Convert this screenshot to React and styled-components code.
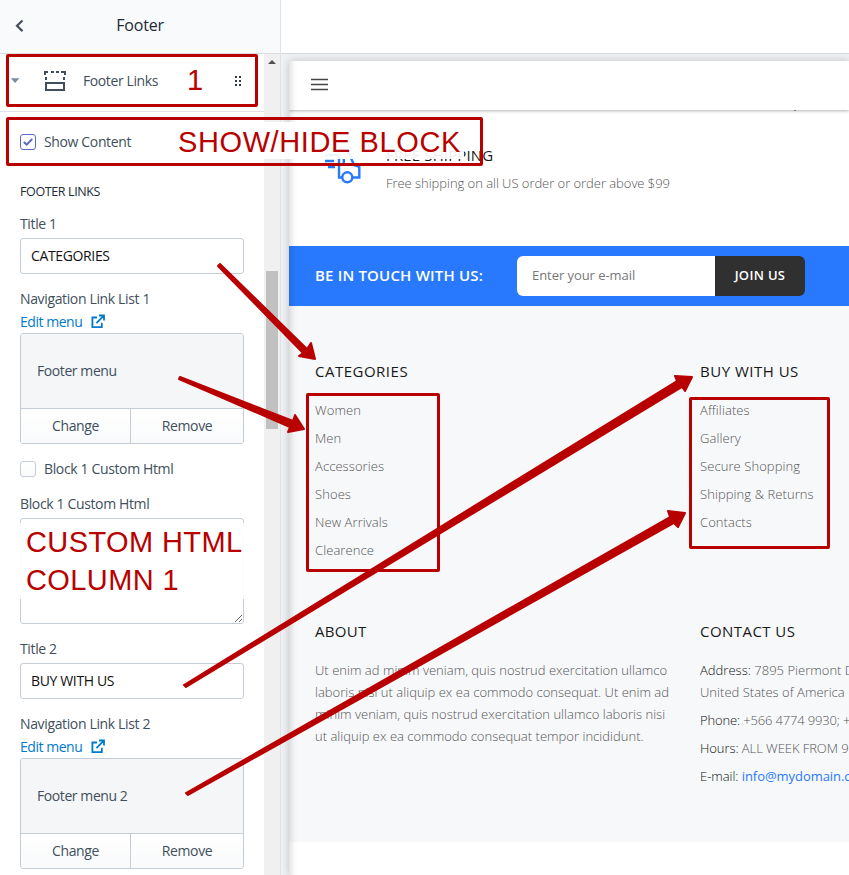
import React from "react";
import styled, { createGlobalStyle } from "styled-components";

const RED = "#b90000";
const LINE = "#c4cdd5";

const GlobalStyle = createGlobalStyle`
  * { box-sizing: border-box; }
  body { margin: 0; background: #fff; font-family: "Open Sans", "Noto Sans", sans-serif; }
  input, textarea, button { font: inherit; letter-spacing: inherit; margin: 0; }
  h2, h3, p, ul { margin: 0; padding: 0; font-weight: inherit; }
`;

const Page = styled.div`
  position: relative;
  display: flex;
  width: 849px;
  height: 875px;
  overflow: hidden;
`;

/* ---------- settings sidebar ---------- */
const Sidebar = styled.aside`
  display: flex;
  flex-direction: column;
  flex: 0 0 281px;
  border-right: 1px solid #dfe3e8;
  font-size: 14px;
  letter-spacing: -0.36px;
  color: #414f5c;
`;
const SidebarHeader = styled.header`
  display: flex;
  align-items: center;
  flex: 0 0 54px;
  padding: 0 0 3px 15px;
  background: #f9fafb;
  border-bottom: 1px solid #d9dde1;
`;
const HeaderTitle = styled.h2`
  flex: 1;
  padding-right: 25px;
  text-align: center;
  font-size: 16px;
  letter-spacing: -0.2px;
  color: #212b36;
`;
const SidebarBody = styled.div`
  display: flex;
  flex: 1;
  min-height: 0;
`;
const Settings = styled.div`
  flex: 0 0 264px;
`;
const SectionRow = styled.div`
  display: flex;
  align-items: center;
  height: 58px;
  padding: 0 22px 4px 10px;
  border-bottom: 1px solid #dfe3e8;
`;
const SectionName = styled.span`
  flex: 1;
  padding-left: 17px;
  letter-spacing: -0.4px;
`;
const Caret = styled.svg`
  flex: none;
  margin-right: 24px;
`;
const Fields = styled.div`
  display: flex;
  flex-direction: column;
  padding: 20px 20px 0;
`;
const CheckRow = styled.label`
  display: flex;
  align-items: center;
  gap: 8px;
  height: 20px;
  line-height: 20px;
`;
const CheckBox = styled.span`
  display: flex;
  align-items: center;
  justify-content: center;
  width: 16px;
  height: 16px;
  border: 1px solid ${(p) => (p.$on ? "#5c6ac4" : LINE)};
  border-radius: 3px;
  background: ${(p) => (p.$on ? "#fff" : "linear-gradient(#fff, #f9fafb)")};
`;
const GroupTitle = styled.h3`
  height: 20px;
  margin: 30px 0 12px;
  line-height: 20px;
  font-size: 12.5px;
  letter-spacing: -0.38px;
  color: #212b36;
`;
const Label = styled.span`
  height: 22px;
  line-height: 20px;
`;
const Input = styled.input`
  height: 36px;
  margin: 2px 0 15px;
  padding: 0 10px 2px;
  border: 1px solid ${LINE};
  border-radius: 3px;
  color: #111;
  background: #fff;
`;
const MenuLink = styled.a`
  display: flex;
  align-items: center;
  gap: 9px;
  height: 22px;
  padding-bottom: 2px;
  letter-spacing: -0.46px;
  color: #007ace;
`;
const MenuCard = styled.div`
  height: 111px;
  border: 1px solid ${LINE};
  border-radius: 3px;
  overflow: hidden;
`;
const MenuName = styled.div`
  display: flex;
  align-items: center;
  height: 74px;
  padding: 0 0 2px 16px;
  letter-spacing: -0.42px;
  background: #f4f6f8;
`;
const CardActions = styled.div`
  display: grid;
  grid-template-columns: 109px 1fr;
  height: 35px;
`;
const CardButton = styled.button`
  padding: 0 0 1px;
  border: 0;
  border-top: 1px solid ${LINE};
  border-left: ${(p) => (p.$divided ? `1px solid ${LINE}` : "0")};
  background: linear-gradient(#fff, #f9fafb);
  color: #414f5c;
`;
const CustomHtml = styled.div`
  display: flex;
  flex-direction: column;
  margin: 15px 0 15px;
  gap: 15px;
`;
const AreaField = styled.div`
  display: flex;
  flex-direction: column;
`;
const TextArea = styled.textarea`
  height: 106px;
  margin-top: 2px;
  border: 1px solid ${LINE};
  border-radius: 3px;
  resize: vertical;
`;
const ScrollTrack = styled.div`
  flex: 0 0 16px;
  display: flex;
  flex-direction: column;
  align-items: center;
  background: #f0f0f0;
`;
const ScrollUp = styled.svg`
  flex: none;
  margin: 5px 0 206px;
`;
const ScrollThumb = styled.div`
  width: 12px;
  height: 158px;
  background: #c1c1c1;
`;

/* ---------- store preview ---------- */
const Preview = styled.main`
  display: flex;
  flex-direction: column;
  flex: 1;
  min-width: 0;
  background: #eff1f4;
`;
const PreviewBar = styled.div`
  flex: 0 0 54px;
  background: #fff;
  border-bottom: 1px solid #d5d8db;
`;
const Frame = styled.div`
  position: relative;
  flex: 1;
  margin: 7px 0 0 8px;
  background: #fff;
  box-shadow: 0 0 8px rgba(0, 0, 0, 0.2);
  overflow: hidden;
  clip-path: inset(-7px 0 0 -8px);
  &::after {
    content: "";
    position: absolute;
    inset: 0 auto 0 0;
    width: 9px;
    background: linear-gradient(90deg, rgba(0, 0, 0, 0.11), rgba(0, 0, 0, 0.02) 60%, transparent);
  }
`;
const StoreHeader = styled.header`
  position: relative;
  display: flex;
  align-items: center;
  height: 49px;
  padding: 0 22px 2px;
  background: #fff;
  box-shadow: 0 1px 3px rgba(0, 0, 0, 0.3);
  &::after {
    content: "";
    position: absolute;
    left: 505px;
    bottom: -1px;
    width: 2px;
    height: 1px;
    background: #777;
  }
`;
const Service = styled.section`
  display: flex;
  gap: 25px;
  height: 136px;
  padding: 35px 0 0 36px;
`;
const ServiceText = styled.div`
  display: flex;
  flex-direction: column;
`;
const ServiceTitle = styled.h3`
  margin-top: -1px;
  line-height: 22px;
  font-size: 15px;
  letter-spacing: 0.14px;
  color: #191919;
`;
const ServiceNote = styled.p`
  margin-top: 7px;
  line-height: 20px;
  font-size: 13px;
  font-weight: 300;
  letter-spacing: -0.04px;
  color: #555;
`;
const Newsletter = styled.section`
  display: flex;
  align-items: center;
  height: 60px;
  padding-left: 26px;
  background: #2879fe;
`;
const NewsTitle = styled.h3`
  width: 202px;
  padding-bottom: 3px;
  font-size: 15px;
  font-weight: 600;
  letter-spacing: 0.18px;
  color: #fff;
`;
const MailInput = styled.input`
  width: 198px;
  height: 40px;
  padding: 0 15px 2px;
  border: 0;
  border-radius: 6px 0 0 6px;
  background: #fff;
  font-size: 13px;
  letter-spacing: -0.06px;
  &::placeholder { color: #777; opacity: 1; }
`;
const JoinButton = styled.button`
  width: 90px;
  height: 40px;
  padding: 0 0 2px;
  border: 0;
  border-radius: 0 6px 6px 0;
  background: #303030;
  color: #fff;
  font-size: 13px;
  font-weight: 600;
  letter-spacing: 0.32px;
`;
const StoreFooter = styled.footer`
  display: grid;
  grid-template-columns: 385px 1fr;
  grid-template-rows: 260px 1fr;
  height: 536px;
  padding: 54px 0 0 26px;
  background: #f7f8fa;
`;
const FooterBlock = styled.section`
  min-width: 0;
  font-size: 13px;
  font-weight: 300;
  color: #555;
  white-space: nowrap;
`;
const FooterTitle = styled.h3`
  line-height: 22px;
  font-size: 15px;
  font-weight: 400;
  letter-spacing: ${(p) => p.$track || 0.5}px;
  color: #191919;
`;
const LinkList = styled.ul`
  margin-top: 14px;
  list-style: none;
  line-height: 28px;
`;
const LinkItem = styled.li`
  height: 28px;
  letter-spacing: 0.08px;
`;
const Paragraph = styled.p`
  margin-top: 17px;
  line-height: 22px;
  letter-spacing: 0.02px;
`;
const Contact = styled.p`
  margin-top: ${(p) => (p.$first ? 17 : 6)}px;
  line-height: 22px;
  letter-spacing: ${(p) => p.$track || 0}px;
`;
const Term = styled.span`
  color: #111;
`;
const Mail = styled.a`
  color: #2879fe;
  font-weight: 400;
`;

/* ---------- tutorial annotations over the page ---------- */
const Marker = styled.div`
  position: absolute;
  left: ${(p) => p.$x}px;
  top: ${(p) => p.$y}px;
  width: ${(p) => p.$w}px;
  height: ${(p) => p.$h}px;
  border: 3px solid ${RED};
  border-radius: 2px;
`;
const Note = styled.div`
  position: absolute;
  left: ${(p) => p.$x}px;
  top: ${(p) => p.$y}px;
  width: ${(p) => p.$w}px;
  padding: ${(p) => p.$drop || 0}px 0 0 ${(p) => p.$pad || 0}px;
  background: ${(p) => (p.$plain ? "none" : "rgba(255, 255, 255, 0.92)")};
  font-family: "Liberation Sans", Arial, sans-serif;
  font-size: 29px;
  line-height: ${(p) => p.$lh || 35}px;
  letter-spacing: ${(p) => p.$track || 0}px;
  color: ${RED};
  white-space: pre;
`;
const Arrows = styled.svg`
  position: absolute;
  inset: 0;
  pointer-events: none;
`;

const ExternalIcon = () => (
  <svg width="14" height="14" viewBox="0 0 14 14" fill="none" stroke="#007ace" strokeWidth="1.8">
    <path d="M6 3.500H1.400v9.600h9.400V8.700M8 1.500h5v5M12.600 1.900 5.400 9.100" />
  </svg>
);

const MenuPicker = ({ label, name }) => (
  <>
    <Label>{label}</Label>
    <MenuLink>Edit menu<ExternalIcon /></MenuLink>
    <MenuCard>
      <MenuName>{name}</MenuName>
      <CardActions>
        <CardButton>Change</CardButton>
        <CardButton $divided>Remove</CardButton>
      </CardActions>
    </MenuCard>
  </>
);

const Links = ({ title, items }) => (
  <FooterBlock>
    <FooterTitle>{title}</FooterTitle>
    <LinkList>{items.map((t) => <LinkItem key={t}>{t}</LinkItem>)}</LinkList>
  </FooterBlock>
);

export default function App() {
  return (
    <Page>
      <GlobalStyle />
      <Sidebar>
        <SidebarHeader>
          <svg width="10" height="14" viewBox="0 0 10 14" fill="none" stroke="#454f5b" strokeWidth="2.2">
            <path d="M7.500 2.500 2 7.800 7.500 13.100" />
          </svg>
          <HeaderTitle>Footer</HeaderTitle>
        </SidebarHeader>
        <SidebarBody>
          <Settings>
            <SectionRow>
              <Caret width="10" height="6" viewBox="0 0 10 6"><path d="M.8.200h8.600L5.100 5z" fill="#798c9c" /></Caret>
              <svg width="22" height="22" viewBox="0 0 22 22" fill="none" stroke="#414f5c" strokeWidth="2">
                <path d="M2 13h18v7H2z" />
                <path d="M1 5V2h3M7 2h3M12 2h3M17 2h4v3M2 7v3M20 7v3" />
              </svg>
              <SectionName>Footer Links</SectionName>
              <svg width="8" height="12" viewBox="0 0 8 12" fill="#303a45">
                <path d="M1 1h2v2H1zM5 1h2v2H5zM1 5h2v2H1zM5 5h2v2H5zM1 9h2v2H1zM5 9h2v2H5z" />
              </svg>
            </SectionRow>
            <Fields>
              <CheckRow>
                <CheckBox $on>
                  <svg width="10" height="8" viewBox="0 0 10 8" fill="none" stroke="#5c6ac4" strokeWidth="2">
                    <path d="M.8 4 3.700 6.600 9.200 1" />
                  </svg>
                </CheckBox>
                Show Content
              </CheckRow>
              <GroupTitle>FOOTER LINKS</GroupTitle>
              <Label>Title 1</Label>
              <Input defaultValue="CATEGORIES" />
              <MenuPicker label="Navigation Link List 1" name="Footer menu" />
              <CustomHtml>
                <CheckRow><CheckBox />Block 1 Custom Html</CheckRow>
                <AreaField>
                  <Label>Block 1 Custom Html</Label>
                  <TextArea />
                </AreaField>
              </CustomHtml>
              <Label>Title 2</Label>
              <Input defaultValue="BUY WITH US" />
              <MenuPicker label="Navigation Link List 2" name="Footer menu 2" />
            </Fields>
          </Settings>
          <ScrollTrack>
            <ScrollUp width="8" height="6" viewBox="0 0 8 6"><path d="M0 5 4 1l4 4z" fill="#505050" /></ScrollUp>
            <ScrollThumb />
          </ScrollTrack>
        </SidebarBody>
      </Sidebar>

      <Preview>
        <PreviewBar />
        <Frame>
          <StoreHeader>
            <svg width="17" height="13" viewBox="0 0 17 13" stroke="#444" strokeWidth="1.3">
              <path d="M0 1.500h17M0 6.500h17M0 11.500h17" />
            </svg>
          </StoreHeader>
          <Service>
            <svg width="36" height="40" viewBox="0 0 36 40" fill="none" stroke="#2879fe" strokeWidth="2.4">
              <path d="M0 10h14v22.500h3M14 5h9l3 8 3 7 5.300 2v10.500h-6.500M18.800 14v7M0 16h9M3 22h7" />
              <circle cx="22.300" cy="32.300" r="5" />
            </svg>
            <ServiceText>
              <ServiceTitle>FREE SHIPPING</ServiceTitle>
              <ServiceNote>Free shipping on all US order or order above $99</ServiceNote>
            </ServiceText>
          </Service>
          <Newsletter>
            <NewsTitle>BE IN TOUCH WITH US:</NewsTitle>
            <MailInput placeholder="Enter your e-mail" />
            <JoinButton>JOIN US</JoinButton>
          </Newsletter>
          <StoreFooter>
            <Links title="CATEGORIES" items={["Women", "Men", "Accessories", "Shoes", "New Arrivals", "Clearence"]} />
            <Links title="BUY WITH US" items={["Affiliates", "Gallery", "Secure Shopping", "Shipping & Returns", "Contacts"]} />
            <FooterBlock>
              <FooterTitle $track={0.3}>ABOUT</FooterTitle>
              <Paragraph>
                Ut enim ad minim veniam, quis nostrud exercitation ullamco<br />
                laboris nisi ut aliquip ex ea commodo consequat. Ut enim ad<br />
                minim veniam, quis nostrud exercitation ullamco laboris nisi<br />
                ut aliquip ex ea commodo consequat tempor incididunt.
              </Paragraph>
            </FooterBlock>
            <FooterBlock>
              <FooterTitle $track={0.45}>CONTACT US</FooterTitle>
              <Contact $first $track={0.02}><Term>Address:</Term> 7895 Piermont Dr<br />United States of America</Contact>
              <Contact $track={-0.15}><Term>Phone:</Term> +566 4774 9930; +</Contact>
              <Contact $track={-0.06}><Term>Hours:</Term> ALL WEEK FROM 9</Contact>
              <Contact $track={-0.05}><Term>E-mail:</Term> <Mail>info@mydomain.com</Mail></Contact>
            </FooterBlock>
          </StoreFooter>
        </Frame>
      </Preview>

      <Note $x={170} $y={122} $w={294} $pad={8} $drop={3} $lh={34} $track={0.6}>SHOW/HIDE BLOCK</Note>
      <Note $x={187} $y={63} $w={18} $plain>1</Note>
      <Note $x={20} $y={523} $w={224} $pad={6} $lh={38} $track={0.4}>{"CUSTOM HTML\nCOLUMN 1"}</Note>
      <Marker $x={6} $y={54} $w={252} $h={53} />
      <Marker $x={6} $y={117} $w={477} $h={49} />
      <Marker $x={306} $y={393} $w={134} $h={179} />
      <Marker $x={689} $y={397} $w={141} $h={152} />
      <Arrows width="849" height="875" viewBox="0 0 849 875" fill={RED} stroke={RED} strokeWidth="2" strokeLinejoin="round">
        <path d="M220 264 307 349 311 343 315 359 299 356 303 353 218 266z" />
        <path d="M180 377 293 421 295 415 304 429 288 432 290 427 179 379z" />
        <path d="M184 685 677 381 675 376 692 377 685 391 682 387 186 687z" />
        <path d="M186 793 670 517 668 511 685 513 678 527 674 523 188 795z" />
      </Arrows>
    </Page>
  );
}
